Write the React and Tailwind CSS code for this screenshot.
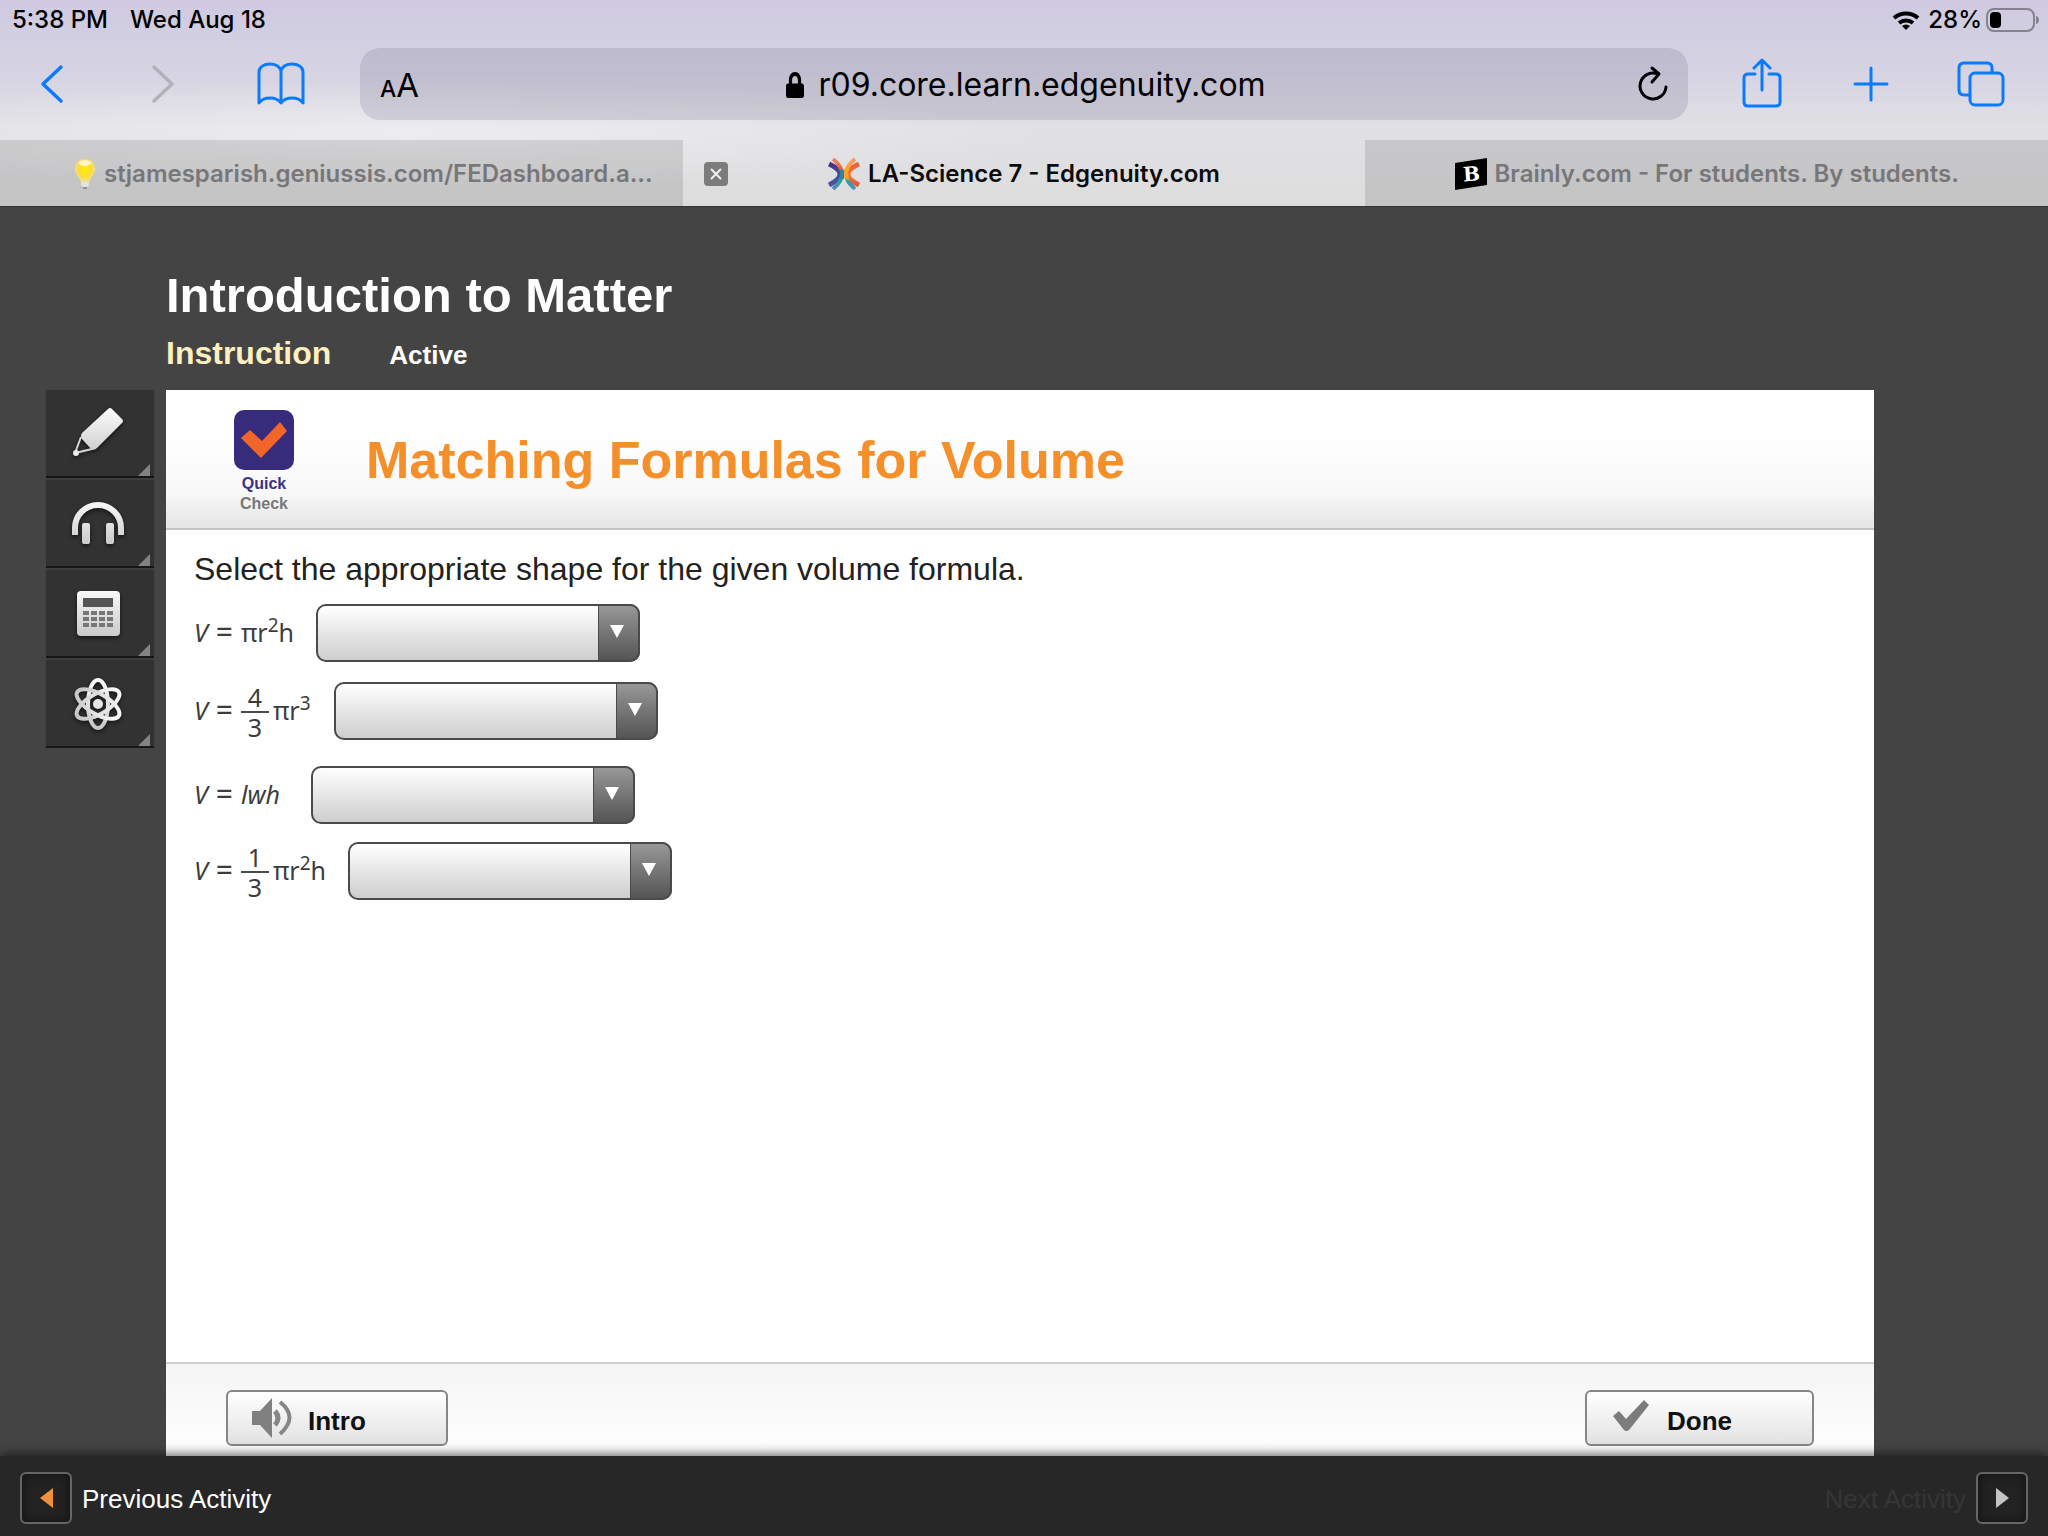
import { FaLock } from "react-icons/fa";

const TABS = [
  { id: "genius", title: "stjamesparish.geniussis.com/FEDashboard.a...", look: "bg-black/11 pl-[44px] text-[#77777a]" },
  { id: "edgenuity", title: "LA-Science 7 - Edgenuity.com", look: "text-[#0c0c0d]", active: true },
  { id: "brainly", title: "Brainly.com - For students. By students.", look: "bg-black/11 text-[#77777a]" },
];

const SHAPES = ["", "cylinder", "sphere", "rectangular prism", "cone"];

/* ── Browser icons ── */

const BulbIcon = () => (
  <svg width="22" height="32" viewBox="0 0 22 32" aria-hidden="true">
    <defs>
      <radialGradient id="bulb" cx="50%" cy="45%" r="60%">
        <stop offset="0" stopColor="#ffee00" />
        <stop offset="0.55" stopColor="#fbdc3c" />
        <stop offset="1" stopColor="#f3e3a0" />
      </radialGradient>
    </defs>
    <path d="M11 1C5 1 1 5 1 11c0 5 4 7 6 13h8c2-6 6-8 6-13C21 5 17 1 11 1z" fill="url(#bulb)" />
    <ellipse cx="11" cy="5" rx="6" ry="3" fill="#fff" opacity="0.7" />
    <path d="M7 24h8v3l-2 2H9l-2-2z" fill="#e4e4e4" />
    <path d="M9 29h4v2H9z" fill="#8c939c" />
  </svg>
);

const EdgenuityIcon = () => (
  <svg width="32" height="32" viewBox="0 0 32 32" fill="none" aria-hidden="true">
    <defs>
      <linearGradient id="edgeLeft" x1="0" y1="5" x2="0" y2="28" gradientUnits="userSpaceOnUse">
        <stop offset="0" stopColor="#4b2f86" />
        <stop offset="0.5" stopColor="#3d4fa0" />
        <stop offset="1" stopColor="#54529c" />
      </linearGradient>
      <linearGradient id="edgeLeftInner" x1="0" y1="1" x2="0" y2="31" gradientUnits="userSpaceOnUse">
        <stop offset="0" stopColor="#ee8a6a" />
        <stop offset="0.3" stopColor="#e9673c" />
        <stop offset="0.45" stopColor="#2e78ab" />
        <stop offset="0.75" stopColor="#2ba0a8" />
        <stop offset="1" stopColor="#5f86b0" />
      </linearGradient>
      <linearGradient id="edgeRight" x1="0" y1="5" x2="0" y2="28" gradientUnits="userSpaceOnUse">
        <stop offset="0" stopColor="#ee5c3c" />
        <stop offset="0.5" stopColor="#f7772e" />
        <stop offset="1" stopColor="#e4503f" />
      </linearGradient>
      <linearGradient id="edgeRightInner" x1="0" y1="1" x2="0" y2="31" gradientUnits="userSpaceOnUse">
        <stop offset="0" stopColor="#f0a070" />
        <stop offset="0.35" stopColor="#fba52c" />
        <stop offset="0.6" stopColor="#fdb52a" />
        <stop offset="0.75" stopColor="#2f96a8" />
        <stop offset="1" stopColor="#4f95b4" />
      </linearGradient>
    </defs>
    <path d="M1 6q22 10 0 21" stroke="url(#edgeLeft)" strokeWidth="5" />
    <path d="M31 6q-22 10 0 21" stroke="url(#edgeRight)" strokeWidth="5" />
    <path d="M5 1q18 15 0 30" stroke="url(#edgeLeftInner)" strokeWidth="4" />
    <path d="M27 1q-18 15 0 30" stroke="url(#edgeRightInner)" strokeWidth="4" />
    <path d="M14 12v9" stroke="#2e86a8" strokeWidth="4" />
    <path d="M18 11v9" stroke="#fba52c" strokeWidth="4" />
  </svg>
);

const BrainlyIcon = () => (
  <svg width="32" height="32" viewBox="0 0 32 32" aria-hidden="true">
    <path d="M0 5L32 0v27L0 32z" fill="#000" />
    <text x="8" y="23" fontSize="20" fontWeight="900" transform="rotate(-4 16 16)" fontFamily="'DejaVu Serif', serif" fill="#fff">B</text>
  </svg>
);

const TAB_ICONS = { genius: BulbIcon, edgenuity: EdgenuityIcon, brainly: BrainlyIcon };

const StatusBar = () => (
  <div className="flex h-10 items-center justify-between pl-3 pr-2 text-[24px] font-medium leading-10 text-black">
    <div className="flex gap-[22px]">
      <span>5:38 PM</span>
      <span>Wed Aug 18</span>
    </div>
    <div className="flex items-center gap-2">
      <svg width="28" height="20" viewBox="0 0 28 20" fill="none" stroke="#000" strokeWidth="4" aria-hidden="true">
        <path d="M2 8a18 18 0 0 1 24 0" />
        <path d="M7 13a11 11 0 0 1 14 0" />
        <path d="M14 20l-4-4a6 6 0 0 1 8 0z" fill="#000" stroke="none" />
      </svg>
      <div className="flex items-center gap-1">
        <span>28%</span>
        <svg width="54" height="26" viewBox="0 0 54 26" aria-hidden="true">
          <rect x="1" y="2" width="47" height="22" rx="7" fill="none" stroke="#85818f" strokeWidth="2" />
          <rect x="4" y="5" width="11" height="16" rx="4" fill="#000" />
          <path d="M50 9c4 1 4 7 0 8z" fill="#85818f" />
        </svg>
      </div>
    </div>
  </div>
);

const Toolbar = () => (
  <div className="flex items-start pt-2">
    <nav className="flex h-[72px] w-[360px] items-center text-[#0a7aff]">
      <button type="button" aria-label="Back" className="ml-10">
        <svg width="24" height="40" viewBox="0 0 24 40" fill="none" stroke="currentColor" strokeWidth="3.500" strokeLinecap="round" strokeLinejoin="round">
          <path d="M21 3L3 20l18 17" />
        </svg>
      </button>
      <button type="button" aria-label="Forward" className="ml-[87px] text-[#b3b0ba]">
        <svg width="24" height="40" viewBox="0 0 24 40" fill="none" stroke="currentColor" strokeWidth="3.500" strokeLinecap="round" strokeLinejoin="round">
          <path d="M3 3l18 17L3 37" />
        </svg>
      </button>
      <button type="button" aria-label="Bookmarks" className="ml-[82px]">
        <svg width="48" height="44" viewBox="0 0 48 44" fill="none" stroke="currentColor" strokeWidth="3" strokeLinejoin="round">
          <path d="M24 8C22 4 18 2 13 2C7 2 2 5 2 10v31c2-3 6-5 11-5s9 2 11 5c2-3 6-5 11-5s9 2 11 5V10c0-5-5-8-11-8C30 2 26 4 24 8z" />
          <path d="M24 8v33" />
        </svg>
      </button>
    </nav>

    <div className="grid h-[72px] flex-1 grid-cols-[1fr_auto_1fr] items-center rounded-[20px] bg-[#77708f]/22 px-5 text-black">
      <button type="button" aria-label="Page settings" className="flex items-baseline justify-self-start pt-1">
        <span className="text-[23px] font-medium">A</span>
        <span className="text-[33px]">A</span>
      </button>
      <label className="flex items-center gap-[14px] pl-1 pt-[2px]">
        <FaLock className="h-[26px] w-[18px]" preserveAspectRatio="none" />
        <input
          type="text"
          aria-label="Address"
          defaultValue="r09.core.learn.edgenuity.com"
          className="field-sizing-content bg-transparent text-[32px] leading-10 outline-none"
        />
      </label>
      <button type="button" aria-label="Reload" className="justify-self-end">
        <svg width="30" height="38" viewBox="0 0 30 38" fill="none" stroke="currentColor" strokeWidth="3" strokeLinecap="round" strokeLinejoin="round">
          <path d="M20 9A13 13 0 1 0 28 22" />
          <path d="M14 3L21 9L14 17" />
        </svg>
      </button>
    </div>

    <nav className="flex h-[72px] w-[360px] items-center justify-end pr-[43px] text-[#0a7aff]">
      <button type="button" aria-label="Share" className="mr-[71px] pb-[2px]">
        <svg width="40" height="50" viewBox="0 0 40 50" fill="none" stroke="currentColor" strokeWidth="3" strokeLinecap="round" strokeLinejoin="round">
          <path d="M13 16H6q-4 0-4 4v24q0 4 4 4h28q4 0 4-4V20q0-4-4-4h-7" />
          <path d="M20 32V3M12 10l8-8l8 8" />
        </svg>
      </button>
      <button type="button" aria-label="New tab" className="mr-[68px]">
        <svg width="36" height="36" viewBox="0 0 36 36" stroke="currentColor" strokeWidth="3" strokeLinecap="round">
          <path d="M18 2v32M2 18h32" />
        </svg>
      </button>
      <button type="button" aria-label="All tabs">
        <svg width="48" height="46" viewBox="0 0 48 46" fill="none" stroke="currentColor" strokeWidth="3" strokeLinejoin="round">
          <rect x="13" y="12" width="33" height="32" rx="5" />
          <path d="M13 34H7q-5 0-5-5V7q0-5 5-5h23q5 0 5 5v5" />
        </svg>
      </button>
    </nav>
  </div>
);

const TabStrip = () => (
  <div className="mt-5 grid grid-cols-3 border-b border-[#333]">
    {TABS.map((tab) => {
      const Icon = TAB_ICONS[tab.id];
      return (
        <div key={tab.id} className={`relative flex h-[66px] items-center justify-center pt-[2px] text-[24px] font-semibold ${tab.look}`}>
          {tab.active && (
            <button
              type="button"
              aria-label="Close tab"
              className="absolute left-[21px] flex h-6 w-6 items-center justify-center rounded-sm bg-[#7c7c7c]"
            >
              <svg width="12" height="12" viewBox="0 0 12 12" stroke="#eee" strokeWidth="2">
                <path d="M1 1l10 10M11 1L1 11" />
              </svg>
            </button>
          )}
          <a href="#" className="flex items-center gap-2 whitespace-nowrap">
            <Icon />
            <span>{tab.title}</span>
          </a>
        </div>
      );
    })}
  </div>
);

/* ── Lesson tools ── */

const ToolGradient = () => (
  <defs>
    <linearGradient id="metal" x1="0" y1="0" x2="0" y2="56" gradientUnits="userSpaceOnUse">
      <stop offset="0" stopColor="#ffffff" />
      <stop offset="1" stopColor="#c4c4c4" />
    </linearGradient>
  </defs>
);

const TOOLS = [
  {
    label: "Highlighter",
    icon: (
      <>
        <path d="M42 4l10 10q2 2 0 4L27 43q-2 2-5 2L12 34q-2-3 0-6L38 4q2-2 4 0z" fill="url(#metal)" />
        <path d="M11 32L5 48l17-4" fill="none" stroke="#d5d5d5" strokeWidth="2" />
        <circle cx="6" cy="48" r="3" fill="#ececec" />
      </>
    ),
  },
  {
    label: "Audio",
    icon: (
      <>
        <path d="M5 40V33a23 23 0 0 1 46 0v7" fill="none" stroke="url(#metal)" strokeWidth="6" />
        <rect x="12" y="28" width="8" height="21" rx="2" fill="url(#metal)" />
        <rect x="36" y="28" width="8" height="21" rx="2" fill="url(#metal)" />
      </>
    ),
  },
  {
    label: "Calculator",
    icon: (
      <>
        <rect x="7" y="6" width="43" height="45" rx="4" fill="url(#metal)" />
        <rect x="13" y="13" width="30" height="9" fill="#555" />
        {[26, 32, 38].map((y) =>
          [13, 21, 29, 37].map((x) => <rect key={`${x}-${y}`} x={x} y={y} width="6" height="4" fill="#777" />)
        )}
      </>
    ),
  },
  {
    label: "Science reference",
    icon: (
      <g fill="none" stroke="url(#metal)" strokeWidth="4">
        <ellipse cx="28" cy="29" rx="10" ry="24" />
        <ellipse cx="28" cy="29" rx="10" ry="24" transform="rotate(60 28 29)" />
        <ellipse cx="28" cy="29" rx="10" ry="24" transform="rotate(120 28 29)" />
        <circle cx="28" cy="29" r="5" fill="#e6e6e6" stroke="none" />
      </g>
    ),
  },
];

const ToolRail = () => (
  <aside className="w-[108px] shrink-0 self-start">
    {TOOLS.map((tool) => (
      <button
        key={tool.label}
        type="button"
        aria-label={tool.label}
        className="relative flex h-[90px] w-full items-center justify-center border-b-2 border-t-2 border-b-[#161616] border-t-[#3e3e3e] bg-[#323232] pr-1 first:h-[88px] first:border-t-0"
      >
        <svg width="56" height="56" viewBox="0 0 56 56" className="drop-shadow-[0_2px_2px_rgba(0,0,0,0.6)]">
          <ToolGradient />
          {tool.icon}
        </svg>
        <svg width="12" height="12" viewBox="0 0 12 12" className="absolute bottom-0 right-1">
          <path d="M12 0v12H0z" fill="#838383" />
        </svg>
      </button>
    ))}
  </aside>
);

/* ── Formulas ── */

const Fraction = ({ top }) => (
  <span className="mr-1 ml-2 inline-flex w-7 flex-col items-center pt-1 leading-[28px]">
    <span>{top}</span>
    <span className="h-0.5 w-full bg-[#4a4a4a]" />
    <span>3</span>
  </span>
);

const Power = ({ children }) => <sup className="top-[-10px] text-[19px]">{children}</sup>;

const QUESTIONS = [
  { id: "cylinder", row: "mt-3", width: "w-[122px]", formula: <span>πr<Power>2</Power>h</span> },
  { id: "sphere", row: "mt-5", width: "w-[140px]", fraction: "4", formula: <span>πr<Power>3</Power></span> },
  { id: "prism", row: "mt-[26px]", width: "w-[117px]", formula: <em>lwh</em> },
  { id: "cone", row: "mt-[18px]", width: "w-[154px]", fraction: "1", formula: <span>πr<Power>2</Power>h</span> },
];

const Question = ({ q }) => (
  <div className={`flex h-[58px] items-center ${q.row}`}>
    <label
      htmlFor={q.id}
      className={`flex shrink-0 items-center whitespace-nowrap pb-[2px] font-['Noto_Sans','Open_Sans',sans-serif] text-[25px] leading-[26px] text-[#3c3c3c] ${q.width}`}
    >
      <em>V</em>
      <span className={`text-[30px] ${q.fraction ? "ml-2" : "mx-2"}`}>=</span>
      {q.fraction && <Fraction top={q.fraction} />}
      {q.formula}
    </label>
    <div className="relative h-[58px] w-[324px]">
      <select
        id={q.id}
        defaultValue=""
        className="h-full w-full appearance-none rounded-[10px] border-2 border-[#4a4a4a] bg-linear-to-b from-white to-[#cecece] pl-4 pr-12 text-2xl text-[#222]"
      >
        {SHAPES.map((s) => (
          <option key={s} value={s}>{s}</option>
        ))}
      </select>
      <span className="pointer-events-none absolute inset-y-0 right-0 flex w-[42px] items-center justify-center rounded-r-[10px] border-2 border-l border-[#4a4a4a] bg-linear-to-b from-[#989898] to-[#555] pb-1 pr-1">
        <svg width="14" height="13" viewBox="0 0 14 13" aria-hidden="true">
          <path d="M0 0h14L7 13z" fill="#fff" />
        </svg>
      </span>
    </div>
  </div>
);

const PanelHeader = () => (
  <header className="flex h-[140px] items-start border-b-2 border-[#c4c4c4] bg-linear-to-b from-white from-30% via-[#f8f8f8] via-75% to-[#e4e4e4]">
    <div className="ml-[68px] mt-5 flex w-[60px] flex-col items-center text-base font-bold leading-5">
      <svg width="60" height="60" viewBox="0 0 60 60" aria-hidden="true">
        <rect width="60" height="60" rx="10" fill="#372b7c" />
        <path d="M7 28l9-8l12 11L46 12l7 9L27 48z" fill="#f26529" />
      </svg>
      <span className="mt-1 text-[#3b3186]">Quick</span>
      <span className="text-[#77787b]">Check</span>
    </div>
    <h2 className="ml-[72px] text-[52px] font-bold leading-[140px] text-[#f58f2a]">Matching Formulas for Volume</h2>
  </header>
);

const PANEL_BUTTON =
  "flex h-14 items-center rounded-md border-2 border-[#868686] bg-linear-to-b from-white to-[#e2e2e2] text-[26px] font-bold text-[#111]";

const PanelFooter = () => (
  <footer className="flex h-[94px] items-start justify-between border-t-2 border-[#d0d0d0] bg-linear-to-b from-[#f5f5f5] to-white px-[60px] pt-[26px]">
    <button type="button" className={`${PANEL_BUTTON} w-[222px] pl-6`}>
      <svg width="40" height="42" viewBox="0 0 40 42" aria-hidden="true">
        <path d="M0 14h8L20 1v40L8 28H0z" fill="#808080" />
        <g fill="none" stroke="#868686">
          <path d="M23 14q6 7 0 14" strokeWidth="5" />
          <path d="M28 5q19 15 0 32" strokeWidth="4" />
        </g>
      </svg>
      <span className="ml-4 pt-[6px]">Intro</span>
    </button>
    <button type="button" className={`${PANEL_BUTTON} w-[229px] pl-6`}>
      <svg width="40" height="36" viewBox="0 0 40 36" aria-hidden="true">
        <path d="M2 16l6-5l7 8L33 0l5 5L18 30q-3 2-5 0z" fill="#7c7c7c" />
      </svg>
      <span className="ml-4 pt-[6px]">Done</span>
    </button>
  </footer>
);

const NAV_BOX =
  "flex h-[52px] w-[52px] items-center justify-center rounded-md border-2 border-[#666] bg-[#222] shadow-[inset_0_0_8px_#111]";

const ActivityBar = () => (
  <div className="relative flex h-20 items-center justify-between bg-[#272727] px-5 pt-1 text-[26px] shadow-[0_-2px_10px_rgba(0,0,0,0.6)]">
    <button type="button" className="flex items-center gap-[10px] text-white">
      <span className={NAV_BOX}>
        <svg width="13" height="20" viewBox="0 0 13 20"><path d="M13 0v20L0 10z" fill="#f0903a" /></svg>
      </span>
      <span className="pt-[2px]">Previous Activity</span>
    </button>
    <button type="button" disabled className="flex items-center gap-[10px] text-[#363636]">
      <span className="pt-[2px]">Next Activity</span>
      <span className={NAV_BOX}>
        <svg width="13" height="20" viewBox="0 0 13 20"><path d="M0 0v20l13-10z" fill="#c4c4c4" /></svg>
      </span>
    </button>
  </div>
);

export default function App() {
  return (
    <div className="flex min-h-screen flex-col bg-[#444] font-['Liberation_Sans',Arial,sans-serif]">
      <div className="bg-[radial-gradient(ellipse_at_20%_65%,rgba(255,255,255,0.4),transparent_28%),linear-gradient(to_bottom,#cfcae0,#d6d3e3_35%,#e1e0e4_62%,#dddddd)] font-['Inter',sans-serif]">
        <StatusBar />
        <Toolbar />
        <TabStrip />
      </div>

      <div className="pl-[166px] pt-[60px] font-bold text-white">
        <h1 className="text-[49px] leading-[56px]">Introduction to Matter</h1>
        <div className="mt-[10px] flex items-baseline gap-[58px] pb-[15px] leading-10">
          <span className="text-[32px] text-[#fdf0c0]">Instruction</span>
          <span className="text-[26px]">Active</span>
        </div>
      </div>

      <div className="flex flex-1 gap-3 pl-[46px] pr-[174px]">
        <ToolRail />
        <main className="flex flex-1 flex-col bg-white">
          <PanelHeader />
          <section className="flex-1 pl-7 pt-4">
            <p className="text-[32px] leading-[46px] text-[#222]">
              Select the appropriate shape for the given volume formula.
            </p>
            {QUESTIONS.map((q) => (
              <Question key={q.id} q={q} />
            ))}
          </section>
          <PanelFooter />
        </main>
      </div>

      <ActivityBar />
    </div>
  );
}
